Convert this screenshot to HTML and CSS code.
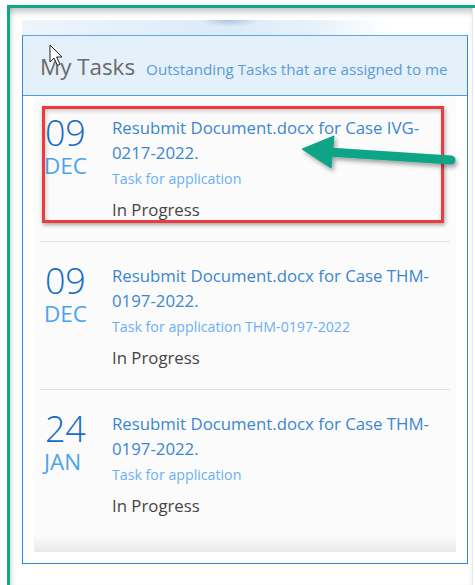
FILE: index.html
```html
<!DOCTYPE html>
<html lang="en">
<head>
<meta charset="utf-8">
<title>My Tasks</title>
<link rel="stylesheet" href="styles.css">
</head>
<body>
<div class="frame">
  <div class="inner">
    <div class="banner"></div>
    <section class="panel">
      <header class="panel-head">
        <h2 class="panel-title">My Tasks</h2>
        <span class="panel-sub">Outstanding Tasks that are assigned to me</span>
      </header>
      <div class="panel-body">
        <ul class="tasks">
          <li class="task">
            <div class="date"><span class="day">09</span><span class="mon">DEC</span></div>
            <div class="info">
              <a class="title" href="#">Resubmit Document.docx for Case IVG-0217-2022.</a>
              <div class="desc">Task for application</div>
              <div class="status">In Progress</div>
            </div>
            <div class="highlight"></div>
          </li>
          <li class="task">
            <div class="date"><span class="day">09</span><span class="mon">DEC</span></div>
            <div class="info">
              <a class="title" href="#">Resubmit Document.docx for Case THM-0197-2022.</a>
              <div class="desc">Task for application THM-0197-2022</div>
              <div class="status">In Progress</div>
            </div>
          </li>
          <li class="task">
            <div class="date"><span class="day">24</span><span class="mon">JAN</span></div>
            <div class="info">
              <a class="title" href="#">Resubmit Document.docx for Case THM-0197-2022.</a>
              <div class="desc">Task for application</div>
              <div class="status">In Progress</div>
            </div>
          </li>
        </ul>
      </div>
    </section>
  </div>
</div>

<!-- callout arrow pointing at the first task -->
<svg class="callout" width="475" height="585" viewBox="0 0 475 585" aria-hidden="true">
  <defs>
    <filter id="arrowShadow" x="-20%" y="-50%" width="140%" height="200%">
      <feDropShadow dx="2" dy="3" stdDeviation="2" flood-color="#000" flood-opacity="0.35"/>
    </filter>
  </defs>
  <g filter="url(#arrowShadow)" fill="#0aa585" stroke="#0aa585">
    <line x1="328" y1="152" x2="451" y2="160" stroke-width="9" stroke-linecap="round"/>
    <polygon points="302,149 334,136 331,168" stroke-width="1" stroke-linejoin="round"/>
  </g>
</svg>

<!-- mouse pointer -->
<svg class="pointer" width="16" height="24" viewBox="0 0 16 24" aria-hidden="true">
  <path d="M1 1 L1 18 L5 14 L8.5 21.5 L11 20.3 L7.6 13 L13 13 Z" fill="#fff" stroke="#222" stroke-width="1" stroke-linejoin="round"/>
</svg>
</body>
</html>
```

FILE: styles.css
```css
html, body {
  margin: 0;
  padding: 0;
  background: #fff;
}

body {
  position: relative;
  width: 475px;
  height: 585px;
  overflow: hidden;
  font-family: "Open Sans", "Noto Sans", sans-serif;
}

.frame {
  margin: 5px 0 0 7px;
  border-top: 3px solid #0ea886;
  border-left: 3px solid #0ea886;
}

.inner {
  min-height: 577px;
  margin-right: 2px;
  padding: 12px 0 0 12px;
  box-sizing: border-box;
  border-right: 1px solid #e8e8e8;
  box-shadow: inset 0 7px 6px -3px rgba(0, 0, 0, 0.22),
              inset 4px 0 4px -2px rgba(0, 0, 0, 0.12);
}

.banner {
  width: 446px;
  height: 15px;
  background:
    radial-gradient(ellipse 30px 7px at 208px 0, rgba(120, 160, 200, 0.5), rgba(120, 160, 200, 0) 100%),
    linear-gradient(to right, #eef5fc 0%, #dcebf8 45%, #e6f1fa 65%, #ffffff 82%);
}

.panel {
  width: 446px;
  box-sizing: border-box;
  border: 1px solid #2d89e0;
  border-top-color: #5ca6ec;
  background: #fff;
}

.panel-head {
  display: flex;
  align-items: baseline;
  gap: 11px;
  height: 60px;
  padding: 0 0 0 17px;
  box-sizing: border-box;
  background: #e4f0fa;
  border-bottom: 1px solid #4b9ce6;
  line-height: 60px;
}

.panel-title {
  margin: 0;
  font-size: 22.4px;
  font-weight: 400;
  color: #6a6a6a;
  padding-top: 1px;
}

.panel-sub {
  font-size: 15.2px;
  color: #5c9bd8;
}

.panel-body {
  padding: 0 11px 11px;
}

.tasks {
  list-style: none;
  margin: 0;
  padding: 0 6px 15px;
  background: linear-gradient(to bottom, #fbfbfb 0, #fbfbfb calc(100% - 16px), #e9e9e9 100%);
}

.task {
  position: relative;
  display: grid;
  grid-template-columns: 67px 1fr;
  padding: 21px 8px 20px 5px;
  border-bottom: 1px solid #e2e2e2;
}

.task:first-child {
  padding-top: 19px;
}

.task:last-child {
  border-bottom: 0;
}

.date {
  display: flex;
  flex-direction: column;
}

.day {
  font-size: 36px;
  font-weight: 300;
  line-height: 36px;
  color: #166bc6;
  letter-spacing: -0.2px;
}

.mon {
  margin-top: 1px;
  font-size: 22.5px;
  line-height: 28px;
  color: #4aa3ef;
  margin-left: -1px;
}

.title {
  display: block;
  font-size: 16.8px;
  line-height: 25px;
  color: #3a86d3;
  text-decoration: none;
}

.desc {
  margin-top: 5px;
  font-size: 14.2px;
  line-height: 18px;
  color: #6cb0f4;
}

.status {
  margin-top: 11px;
  font-size: 16.8px;
  line-height: 22px;
  color: #454545;
}

/* red outline marking the first task */
.highlight {
  position: absolute;
  left: 2px;
  top: 10px;
  width: 402px;
  height: 117px;
  box-sizing: border-box;
  border: 3px solid #ea3b40;
  box-shadow: 1px 2px 4px rgba(0, 0, 0, 0.35), inset 1px 2px 4px rgba(0, 0, 0, 0.2);
  pointer-events: none;
}

.callout {
  position: absolute;
  left: 0;
  top: 0;
  pointer-events: none;
}

.pointer {
  position: absolute;
  left: 49px;
  top: 44px;
  pointer-events: none;
}
```
